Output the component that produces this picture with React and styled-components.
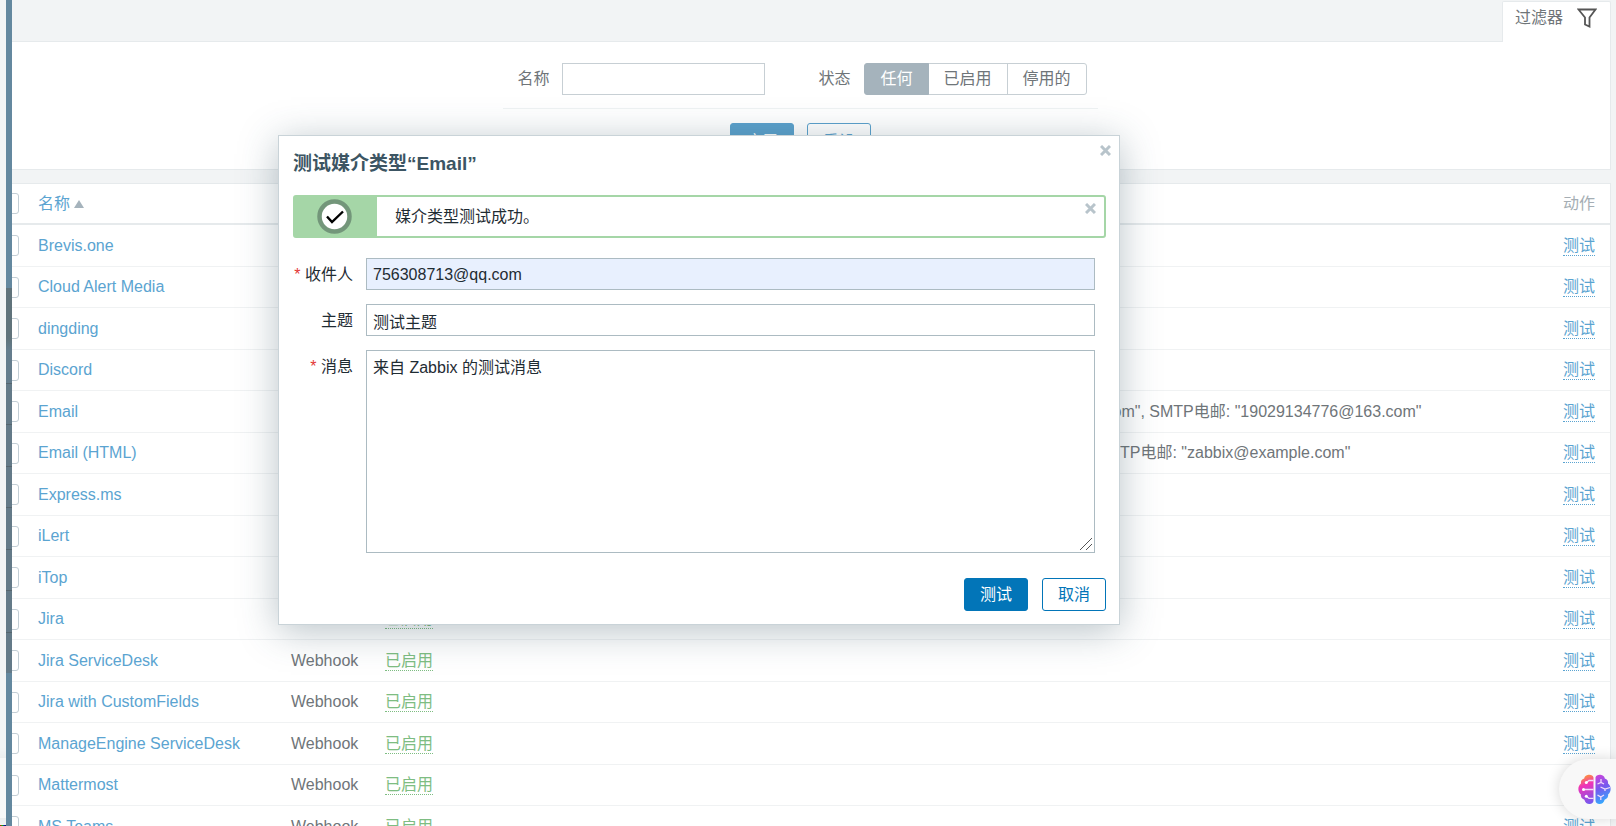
import React, { useState } from "react";
import styled, { createGlobalStyle, css } from "styled-components";

const GlobalStyle = createGlobalStyle`
  * {
    box-sizing: border-box;
  }
  body {
    margin: 0;
    overflow: hidden;
    background: #f2f4f5;
    color: #6f7579;
    font-family: "Liberation Sans", "Noto Sans CJK SC", sans-serif;
    font-size: 16px;
    line-height: 18px;
  }
  button, input, textarea {
    font: inherit;
    color: inherit;
  }
`;

const Page = styled.div`
  display: flex;
  height: 100vh;
  overflow: hidden;
`;

/* left edge */

const Gutter = styled.div`
  display: flex;
  flex-direction: column;
  justify-content: flex-end;
  width: 6px;
  flex: none;
`;

const GutterCard = styled.div`
  height: 60px;
  margin-bottom: 7px;
  background: #f8f8f8;
  box-shadow: 0 0 14px rgba(0, 0, 0, 0.16);
`;

const GutterLine = styled.div`
  height: 1px;
  background: linear-gradient(90deg, #e00, #0b0 40%, #00c 70%, #222);
`;

const Sidebar = styled.nav`
  width: 6px;
  flex: none;
  padding-top: 288px;
  background: #64889f;
`;

const MenuHead = styled.div`
  height: 95px;
  background: linear-gradient(#60737b 50px, #657d8d 62px);
`;

const MenuItem = styled.div`
  height: 41px;
  background: #647a88;
  border-top: 1px solid #56666f;
  &:nth-child(odd) {
    height: 42px;
  }
`;

/* main area, its left side slides under the sidebar */

const Main = styled.main`
  flex: 1;
  min-width: 0;
  overflow: hidden;
`;

const Content = styled.div`
  margin: 0 5px 0 -22px;
`;

const FilterTabs = styled.div`
  display: flex;
  justify-content: flex-end;
  padding-top: 1px;
`;

const FilterTab = styled.button`
  display: flex;
  align-items: center;
  gap: 14px;
  height: 41px;
  margin-bottom: -1px;
  padding: 0 13px 9px 12px;
  background: #fff;
  border: 1px solid #e6eaec;
  border-bottom: 0;
  border-radius: 2px 2px 0 0;
  position: relative;
`;

const FilterPanel = styled.form`
  display: flex;
  flex-direction: column;
  align-items: center;
  padding: 21px 0 13px;
  background: #fff;
  border: 1px solid #e6eaec;
`;

const FilterFields = styled.div`
  display: flex;
  align-items: center;
  padding: 0 11px 13px 14px;
  border-bottom: 1px solid #eff2f3;
`;

const FilterName = styled.label`
  display: flex;
  align-items: center;
  gap: 13px;
  margin-right: 53px;
  input {
    width: 203px;
    height: 32px;
    padding: 0 6px;
    border: 1px solid #c7cfd4;
    background: #fff;
  }
`;

const Segments = styled.div`
  display: flex;
  margin-left: 14px;
`;

const Segment = styled.label`
  position: relative;
  height: 32px;
  padding: 0 15px;
  margin-left: -1px;
  line-height: 30px;
  border: 1px solid #c7cfd4;
  cursor: pointer;
  &:first-child {
    margin-left: 0;
    border-radius: 3px 0 0 3px;
  }
  &:last-child {
    border-radius: 0 3px 3px 0;
  }
  ${({ $active }) =>
    $active &&
    css`
      color: #fff;
      background: #a5b3bc;
      border-color: #a5b3bc;
      z-index: 1;
    `}
  input {
    position: absolute;
    opacity: 0;
    margin: 0;
  }
`;

const Button = styled.button`
  width: 64px;
  height: 33px;
  padding: 0;
  border: 1px solid ${({ $color }) => $color};
  border-radius: 3px;
  background: ${({ $outline, $color }) => ($outline ? "#fff" : $color)};
  color: ${({ $outline, $color }) => ($outline ? $color : "#fff")};
  cursor: pointer;
`;

const ButtonRow = styled.div`
  display: flex;
  gap: 13px;
  padding-top: 14px;
  ${Button} {
    padding-top: 4px;
  }
`;

/* table */

const Table = styled.table`
  width: 100%;
  margin-top: 13px;
  table-layout: fixed;
  border-collapse: separate;
  border-spacing: 0;
  background: #fff;
  border: 1px solid #e6eaec;
  white-space: nowrap;
  th, td {
    padding: 0;
    text-align: left;
    font-weight: normal;
    vertical-align: middle;
  }
  th {
    height: 41px;
    border-bottom: 2px solid #e6eaec;
    color: #a5aeb4;
  }
  td {
    height: 42px;
    border-bottom: 1px solid #f0f2f3;
  }
  tbody tr:nth-child(even) td {
    height: 41px;
  }
  th:last-child, td:last-child {
    padding-right: 15px;
    text-align: right;
  }
`;

const Col = styled.col`
  width: ${({ $w }) => $w}px;
`;

const Checkbox = styled.input`
  display: block;
  appearance: none;
  width: 21px;
  height: 21px;
  margin: 0 0 0 7px;
  background: #fff;
  border: 1px solid #c3ced5;
  border-radius: 3px;
`;

const Link = styled.a`
  color: #5ba4d1;
  text-decoration: none;
`;

const SortLink = styled(Link)`
  display: flex;
  align-items: center;
  gap: 4px;
`;

const DottedLink = styled(Link)`
  display: inline-block;
  padding-top: 1px;
  border-bottom: 1px dotted;
  color: ${({ $green }) => ($green ? "#7ebd82" : "#5ba4d1")};
`;

/* modal */

const Modal = styled.section`
  position: absolute;
  top: 135px;
  left: 278px;
  width: 842px;
  padding: 15px 13px 13px 14px;
  background: #fff;
  border: 1px solid #c9d3d8;
  box-shadow: 0 6px 36px rgba(50, 80, 95, 0.34);
  color: #1f2c33;
  z-index: 2;
`;

const ModalTitle = styled.h4`
  margin: 0 0 18px;
  font-size: 19px;
  line-height: 26px;
  color: #3c5563;
`;

const CloseButton = styled.button`
  position: absolute;
  top: ${({ $inset }) => $inset}px;
  right: 8px;
  display: flex;
  padding: 0;
  border: 0;
  background: none;
  color: #b8c4cb;
  cursor: pointer;
`;

const Message = styled.output`
  position: relative;
  display: flex;
  align-items: center;
  height: 43px;
  margin-bottom: 20px;
  border: 2px solid #a5d6a7;
  border-radius: 3px;
`;

const MessageIcon = styled.span`
  display: flex;
  align-items: center;
  justify-content: center;
  width: 82px;
  height: 100%;
  margin-right: 18px;
  padding-right: 4px;
  background: #a5d6a7;
`;

const FormGrid = styled.div`
  display: grid;
  grid-template-columns: 60px 1fr;
  gap: 14px 13px;
  margin-right: 11px;
`;

const FormLabel = styled.label`
  height: 32px;
  line-height: 34px;
  text-align: right;
  ${({ $required }) =>
    $required &&
    css`
      &::before {
        content: "* ";
        color: #e33734;
      }
    `}
`;

const Field = styled.input`
  width: 100%;
  height: 32px;
  padding: 1px 6px 0;
  border: 1px solid #acbbc2;
  background: ${({ $filled }) => ($filled ? "#e8f0fe" : "#fff")};
`;

const TextArea = styled.textarea`
  display: block;
  width: 100%;
  height: 203px;
  padding: 8px 6px;
  border: 1px solid #acbbc2;
  background: #fff;
  &::-webkit-resizer {
    background: linear-gradient(
        135deg,
        transparent 46%,
        #555 46% 53%,
        transparent 53% 71%,
        #555 71% 78%,
        transparent 78%
      )
      1px 1px / 12px 12px no-repeat;
  }
`;

const ModalFooter = styled.div`
  display: flex;
  justify-content: flex-end;
  gap: 14px;
  margin-top: 25px;
`;

const AssistantButton = styled.button`
  position: absolute;
  right: 0;
  bottom: 7px;
  display: flex;
  align-items: center;
  width: 57px;
  height: 60px;
  padding: 0 0 0 19px;
  border: 0;
  border-radius: 30px 0 0 30px;
  background: #f8f8f8;
  box-shadow: 0 0 14px rgba(0, 0, 0, 0.16);
  z-index: 3;
`;

const FunnelIcon = () => (
  <svg width="20" height="20" viewBox="0 0 20 20" fill="none" stroke="#555" strokeWidth="1.8">
    <path d="M1.500 1.500h17L12.500 9.500v9l-4.500-2V9.500z" />
  </svg>
);

const CrossIcon = () => (
  <svg width="11" height="11" viewBox="0 0 11 11" stroke="currentColor" strokeWidth="3">
    <path d="M1 1l9 9M10 1l-9 9" />
  </svg>
);

const CheckIcon = () => (
  <svg width="35" height="35" viewBox="0 0 35 35" fill="none">
    <circle cx="17.5" cy="17.5" r="15" fill="#fff" stroke="#73967a" strokeWidth="4.5" />
    <path d="M10 17.5l5 5.5L26 12.5" stroke="#000" strokeWidth="2.4" />
  </svg>
);

const BrainIcon = () => (
  <svg width="33" height="31" viewBox="0 0 33 31" fill="none">
    <defs>
      <linearGradient id="brainLeft" x1="3" y1="2" x2="13" y2="29" gradientUnits="userSpaceOnUse">
        <stop offset="0" stopColor="#ff9a2e" />
        <stop offset="0.35" stopColor="#f034b8" />
        <stop offset="1" stopColor="#7558f0" />
      </linearGradient>
      <linearGradient id="brainRight" x1="18" y1="2" x2="30" y2="28" gradientUnits="userSpaceOnUse">
        <stop offset="0" stopColor="#c944dc" />
        <stop offset="0.45" stopColor="#7659ee" />
        <stop offset="1" stopColor="#2fb0ff" />
      </linearGradient>
    </defs>
    <path
      d="M15.500 3.500C15 1.500 13 .5 10.500 .8 8 1 6.500 2.500 6.200 4.500 3.800 5 2.600 7 3 9.500 1 11 .2 13 .4 15.500c.1 2.200 1 3.800 2.400 4.800-.2 2.500 1 4.700 3.600 5.400C7 28.500 9 30 11.500 30c2.300 0 4-1.200 4-3.500z"
      fill="url(#brainLeft)"
    />
    <path
      d="M17.500 3.500C18 1.500 20 .5 22.500 .8c2.500.2 4 1.700 4.300 3.700 2.400.5 3.600 2.500 3.200 5 2 1.500 2.800 3.500 2.600 6-.1 2.200-1 3.800-2.400 4.800.2 2.500-1 4.700-3.600 5.400C26 28.500 24 30 21.500 30c-2.300 0-4-1.200-4-3.500z"
      fill="url(#brainRight)"
    />
    <g stroke="#f3d9fb" strokeWidth="1.3">
      <path d="M8.500 8.500L11 6.500h4.500M5.500 15.500h10M8.500 22.500l2.500 1.800h4.500" />
      <path d="M23 5v3.500M19.500 10l3.500-1.500 3 1.500M32 13.500l-5 1.500-4.500-2M27 15v2M19.500 21l3.300 2 3.200-2M22.800 23v3" />
    </g>
    <g fill="#fff">
      <circle cx="8.3" cy="8.5" r="1.5" />
      <circle cx="5.5" cy="15.5" r="1.5" />
      <circle cx="8.3" cy="22.3" r="1.5" />
    </g>
  </svg>
);

const estados = ["任何", "已启用", "停用的"];

const mediaTypes = [
  { name: "Brevis.one", type: "Webhook" },
  { name: "Cloud Alert Media", type: "Webhook" },
  { name: "dingding", type: "Webhook" },
  { name: "Discord", type: "Webhook" },
  {
    name: "Email",
    type: "电子邮件",
    details: 'SMTP服务器: "smtp1.example.com", SMTP HELO: "smtp.example.com", SMTP电邮: "19029134776@163.com"',
  },
  {
    name: "Email (HTML)",
    type: "电子邮件",
    details: 'SMTP服务器: "mail.example.com", SMTP HELO: "example.com", SMTP电邮: "zabbix@example.com"',
  },
  { name: "Express.ms", type: "Webhook" },
  { name: "iLert", type: "Webhook" },
  { name: "iTop", type: "Webhook" },
  { name: "Jira", type: "Webhook" },
  { name: "Jira ServiceDesk", type: "Webhook" },
  { name: "Jira with CustomFields", type: "Webhook" },
  { name: "ManageEngine ServiceDesk", type: "Webhook" },
  { name: "Mattermost", type: "Webhook" },
  { name: "MS Teams", type: "Webhook" },
];

const Filter = () => {
  const [estado, setEstado] = useState(estados[0]);

  return (
    <>
      <FilterTabs>
        <FilterTab type="button">
          过滤器
          <FunnelIcon />
        </FilterTab>
      </FilterTabs>
      <FilterPanel onSubmit={(e) => e.preventDefault()}>
        <FilterFields>
          <FilterName>
            名称
            <input type="text" name="filter_name" />
          </FilterName>
          <span>状态</span>
          <Segments>
            {estados.map((item) => (
              <Segment key={item} $active={item === estado}>
                <input
                  type="radio"
                  name="filter_status"
                  checked={item === estado}
                  onChange={() => setEstado(item)}
                />
                {item}
              </Segment>
            ))}
          </Segments>
        </FilterFields>
        <ButtonRow>
          <Button type="submit" $color="#5ba1cc">应用</Button>
          <Button type="reset" $color="#5ba1cc" $outline>重设</Button>
        </ButtonRow>
      </FilterPanel>
    </>
  );
};

const MediaTable = () => (
  <Table>
    <colgroup>
      <Col $w={47} />
      <Col $w={253} />
      <Col $w={94} />
      <Col $w={244} />
      <col />
      <Col $w={80} />
    </colgroup>
    <thead>
      <tr>
        <th><Checkbox type="checkbox" aria-label="全选" /></th>
        <th>
          <SortLink href="#name">
            名称
            <svg width="10" height="8" viewBox="0 0 10 8">
              <path d="M5 0l5 8H0z" fill="#a5b3bc" />
            </svg>
          </SortLink>
        </th>
        <th>类型</th>
        <th>状态</th>
        <th>细节</th>
        <th>动作</th>
      </tr>
    </thead>
    <tbody>
      {mediaTypes.map(({ name, type, details }) => (
        <tr key={name}>
          <td><Checkbox type="checkbox" aria-label={name} /></td>
          <td><Link href="#edit">{name}</Link></td>
          <td>{type}</td>
          <td><DottedLink href="#status" $green>已启用</DottedLink></td>
          <td>{details}</td>
          <td><DottedLink href="#test">测试</DottedLink></td>
        </tr>
      ))}
    </tbody>
  </Table>
);

const TestModal = () => {
  const [recipient, setRecipient] = useState("756308713@qq.com");
  const [subject, setSubject] = useState("测试主题");
  const [message, setMessage] = useState("来自 Zabbix 的测试消息");

  return (
    <Modal role="dialog" aria-labelledby="modalTitle">
      <CloseButton type="button" aria-label="关闭" $inset={9}>
        <CrossIcon />
      </CloseButton>
      <ModalTitle id="modalTitle">测试媒介类型“Email”</ModalTitle>
      <Message>
        <MessageIcon>
          <CheckIcon />
        </MessageIcon>
        媒介类型测试成功。
        <CloseButton type="button" aria-label="关闭消息" $inset={6}>
          <CrossIcon />
        </CloseButton>
      </Message>
      <FormGrid>
        <FormLabel htmlFor="sendto" $required>收件人</FormLabel>
        <Field id="sendto" type="text" value={recipient} onChange={(e) => setRecipient(e.target.value)} $filled />
        <FormLabel htmlFor="subject">主题</FormLabel>
        <Field id="subject" type="text" value={subject} onChange={(e) => setSubject(e.target.value)} />
        <FormLabel htmlFor="message" $required>消息</FormLabel>
        <TextArea id="message" value={message} onChange={(e) => setMessage(e.target.value)} />
      </FormGrid>
      <ModalFooter>
        <Button type="button" $color="#0275b8">测试</Button>
        <Button type="button" $color="#0275b8" $outline>取消</Button>
      </ModalFooter>
    </Modal>
  );
};

export default function App() {
  return (
    <>
      <GlobalStyle />
      <Page>
        <Gutter>
          <GutterCard />
          <GutterLine />
        </Gutter>
        <Sidebar>
          <MenuHead />
          {[1, 2, 3, 4, 5, 6, 7].map((n) => (
            <MenuItem key={n} />
          ))}
        </Sidebar>
        <Main>
          <Content>
            <Filter />
            <MediaTable />
          </Content>
        </Main>
      </Page>
      <TestModal />
      <AssistantButton type="button" aria-label="AI 助手">
        <BrainIcon />
      </AssistantButton>
    </>
  );
}
